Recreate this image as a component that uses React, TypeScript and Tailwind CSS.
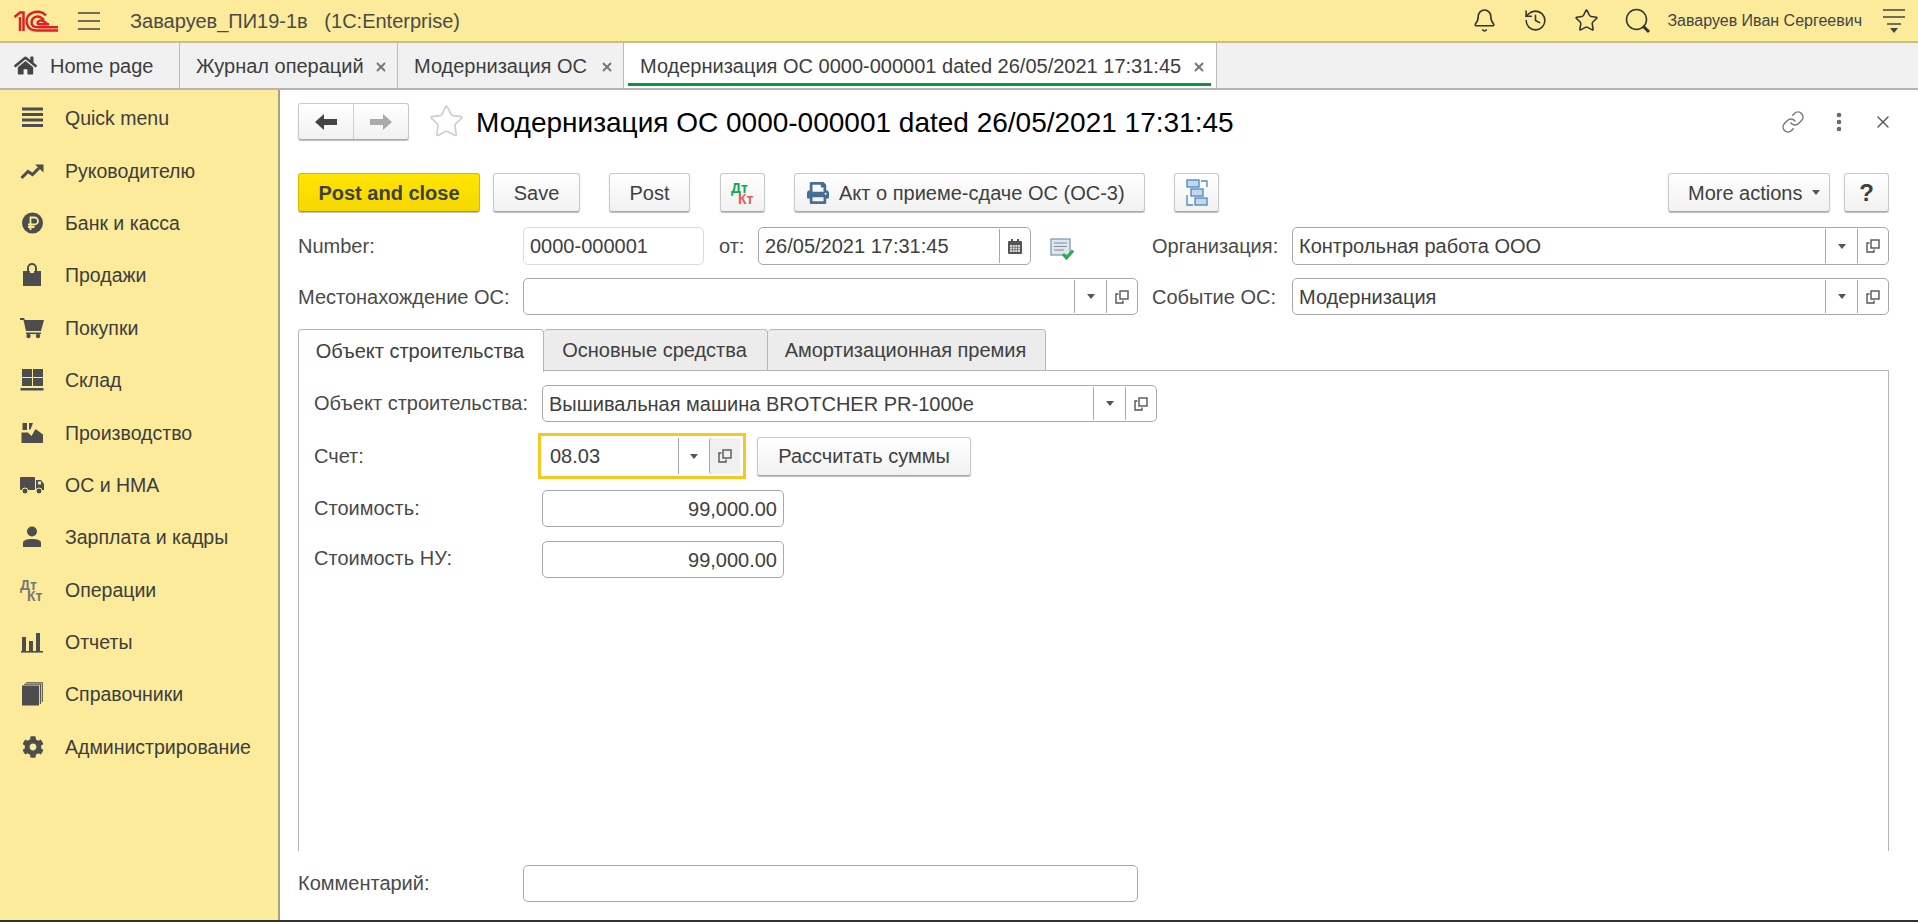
import { Bell, History, Link, MoreVertical, Star, X } from "lucide-react";
import { FaCog, FaHome, FaPrint } from "react-icons/fa";
import type { ReactNode } from "react";

const ink = "#4d4d4d";

function Logo() {
  return (
    <svg width="46" height="22" viewBox="13 8 46 22" fill="none" stroke="#e01f26" strokeWidth="2.5" className="ml-[13px] shrink-0">
      <path d="M14.5 15 L20 10.5 H23.5 V29" />
      <path d="M20 15 V29" />
      <path d="M46 13.5 C42 9 36 9 32 11 C27 13 26 18 27 22 C28 26 32 28.5 37 28.5 H58" />
      <path d="M44 18 C40 14 36 14 33.5 16 C31 18 31 22 33 24 C35 25.2 37 25.2 39 25.2 H58" />
      <path d="M47 22 C44 19 41 18 39 19 C37 20 37 22 39 22.3 H49" />
    </svg>
  );
}

function Caret() {
  return (
    <svg width="8" height="5" viewBox="0 0 8 5" className="shrink-0">
      <path d="M0 0 H8 L4 5 Z" fill="#555" />
    </svg>
  );
}

function CopyIcon() {
  return (
    <svg width="14" height="14" viewBox="0 0 14 14" fill="none" stroke="#555" strokeWidth="1.4">
      <rect x="5" y="1" width="8" height="8" />
      <path d="M3.5 4 H1 V13 H8 V10.5" />
    </svg>
  );
}

function CalendarIcon() {
  return (
    <svg width="14" height="15" viewBox="0 0 14 15">
      <rect x="0" y="2" width="14" height="13" rx="1" fill="#555" />
      <rect x="3" y="0" width="2" height="4" fill="#555" />
      <rect x="9" y="0" width="2" height="4" fill="#555" />
      <rect x="2" y="6" width="10" height="7" fill="#ddd" />
      <path d="M2 8.3 H12 M2 10.6 H12 M4.5 6 V13 M7 6 V13 M9.5 6 V13" stroke="#666" strokeWidth="0.7" />
    </svg>
  );
}

function DocCheckIcon() {
  return (
    <svg width="24" height="22" viewBox="0 0 24 22" className="shrink-0">
      <rect x="1" y="1" width="19" height="16" fill="#dfe6ee" stroke="#7f9bb8" strokeWidth="1.3" />
      <path d="M4 5 H17 M4 8.5 H17 M4 12 H14" stroke="#7f8c99" strokeWidth="1.2" />
      <path d="M13 16 L16.5 20 L23 12.5" fill="none" stroke="#2eae4a" strokeWidth="3" />
    </svg>
  );
}

function StructureIcon() {
  return (
    <svg width="22" height="27" viewBox="0 0 22 27" fill="none">
      <rect x="1" y="1" width="12" height="7" fill="#c4d8ec" stroke="#4f86bb" strokeWidth="1.3" />
      <rect x="5" y="10" width="12" height="7" fill="#c4d8ec" stroke="#4f86bb" strokeWidth="1.3" />
      <rect x="9" y="19" width="12" height="7" fill="#c4d8ec" stroke="#4f86bb" strokeWidth="1.3" />
      <path d="M15 2 H21 V8 M1 16 V26 H7" stroke="#4f86bb" strokeWidth="1.3" />
    </svg>
  );
}

function DebitCredit({ first, second }: { first: string; second: string }) {
  return (
    <svg width="28" height="28" viewBox="0 0 28 28" fontFamily="'Liberation Sans', Arial, sans-serif" fontWeight="700" fontSize="14" className="overflow-visible">
      <text x="2" y="14" fill={first}>Дт</text>
      <text x="9" y="25" fill={second}>Кт</text>
    </svg>
  );
}

function SearchIcon() {
  return (
    <svg width="26" height="26" viewBox="0 0 26 26" fill="none" stroke="#333" className="ml-[26px] shrink-0">
      <circle cx="11.5" cy="11.5" r="10" strokeWidth="1.5" />
      <path d="M18 18 L24 24" strokeWidth="3" />
    </svg>
  );
}

function TopMenuIcon() {
  return (
    <svg width="22" height="24" viewBox="0 0 22 24" className="shrink-0">
      <path d="M0 1 H22 M0 8 H22 M4 15 H18" stroke="#444" strokeWidth="1.4" />
      <path d="M7 19 H15 L11 24 Z" fill="#444" />
    </svg>
  );
}

const sideIcons: Record<string, ReactNode> = {
  menu: (
    <svg width="24" height="24" viewBox="0 0 24 24" fill={ink}>
      <rect x="2" y="1.5" width="21" height="3" />
      <rect x="2" y="7" width="21" height="3" />
      <rect x="2" y="12.5" width="21" height="3" />
      <rect x="2" y="18" width="21" height="3" />
    </svg>
  ),
  trend: (
    <svg width="24" height="24" viewBox="0 0 24 24" fill={ink}>
      <path d="M1.5 19 L8 12.5 L12.5 15.5 L19 9" fill="none" stroke={ink} strokeWidth="3" />
      <path d="M15 5.5 H23.5 V13.5 Z" />
    </svg>
  ),
  ruble: (
    <svg width="24" height="24" viewBox="0 0 24 24">
      <circle cx="12.5" cy="12" r="10.5" fill={ink} />
      <path d="M10.5 19 V6.5 H14.5 A3.5 3.5 0 0 1 14.5 13.5 H8 M8 16 H14.5" fill="none" stroke="#fbeb9b" strokeWidth="1.8" />
    </svg>
  ),
  bag: (
    <svg width="24" height="24" viewBox="0 0 24 24" fill={ink}>
      <path d="M3 8 H21 V23 H3 Z" />
      <path d="M8 11 V5 A4 4 0 0 1 16 5 V11" fill="none" stroke={ink} strokeWidth="2" />
      <rect x="10" y="6" width="4" height="4" fill="#fbeb9b" />
    </svg>
  ),
  cart: (
    <svg width="24" height="24" viewBox="0 0 24 24" fill={ink}>
      <path d="M0 2 H4 L5 4 H24 L21 15 H6 L3.5 4 H0 Z" />
      <rect x="6" y="16.5" width="15" height="1.6" />
      <circle cx="8.5" cy="20" r="2.2" />
      <circle cx="18" cy="20" r="2.2" />
    </svg>
  ),
  grid: (
    <svg width="24" height="24" viewBox="0 0 24 24" fill={ink}>
      <rect x="2" y="1" width="10" height="8" />
      <rect x="13" y="1" width="10" height="8" />
      <rect x="2" y="10" width="10" height="8" />
      <rect x="13" y="10" width="10" height="8" />
      <rect x="0.5" y="20" width="23" height="2.5" />
    </svg>
  ),
  factory: (
    <svg width="24" height="24" viewBox="0 0 24 24" fill={ink}>
      <path d="M1.5 22 V11.5 H8 L11.5 15 L15.5 8 L23 13.5 V22 Z" />
      <path d="M2.5 2 H7 V9 H2.5 Z" />
      <path d="M9 2 H13 L10.5 8.5 H9 Z" />
    </svg>
  ),
  truck: (
    <svg width="24" height="24" viewBox="0 0 24 24" fill={ink}>
      <rect x="0" y="4" width="15" height="13" rx="1" />
      <path d="M16 7 H21 L24 11 V17 H16 Z" />
      <rect x="18" y="8.5" width="3" height="3" fill="#fbeb9b" />
      <circle cx="5" cy="18" r="3" stroke="#fbeb9b" />
      <circle cx="19" cy="18" r="3" stroke="#fbeb9b" />
    </svg>
  ),
  person: (
    <svg width="24" height="24" viewBox="0 0 24 24" fill={ink}>
      <circle cx="12" cy="6.5" r="5" />
      <path d="M3 22 V18 C3 15 7 14 12 14 C17 14 21 15 21 18 V22 Z" />
    </svg>
  ),
  bars: (
    <svg width="24" height="24" viewBox="0 0 24 24" fill={ink}>
      <rect x="2" y="7" width="4" height="14" />
      <rect x="9" y="11" width="4" height="10" />
      <rect x="16" y="3" width="4" height="18" />
      <rect x="1" y="21" width="22" height="1.6" />
    </svg>
  ),
  books: (
    <svg width="24" height="24" viewBox="0 0 24 24" fill={ink}>
      <rect x="2" y="3.5" width="17" height="20" />
      <path d="M4 2.3 H20.4 V22 M6 0.7 H22.3 V20" fill="none" stroke={ink} strokeWidth="1.1" />
    </svg>
  ),
  gear: <FaCog size={22} color={ink} className="ml-[1px]" />,
  dtkt: <DebitCredit first="#777" second="#777" />,
};

const sideItems = [
  ["menu", "Quick menu"],
  ["trend", "Руководителю"],
  ["ruble", "Банк и касса"],
  ["bag", "Продажи"],
  ["cart", "Покупки"],
  ["grid", "Склад"],
  ["factory", "Производство"],
  ["truck", "ОС и НМА"],
  ["person", "Зарплата и кадры"],
  ["dtkt", "Операции"],
  ["bars", "Отчеты"],
  ["books", "Справочники"],
  ["gear", "Администрирование"],
];

function Sidebar() {
  return (
    <aside className="flex w-[280px] shrink-0 flex-col border-r-2 border-[#a9a277] bg-[#fbeb9b] pt-[2px] text-[19.5px]">
      {sideItems.map(([icon, label]) => (
        <div key={label} className="flex h-[52.4px] items-center pl-5 text-[#3d3d3d]">
          <span className="flex h-6 w-6 shrink-0 items-center justify-center">{sideIcons[icon]}</span>
          <span className="ml-[21px]">{label}</span>
        </div>
      ))}
    </aside>
  );
}

function DocTab({ label, width, active }: { label: string; width: string; active?: boolean }) {
  return (
    <div className={`relative flex h-full shrink-0 items-center border-r border-[#b9b9b9] ${width} ${active ? "bg-white" : ""}`}>
      <span className="ml-4 whitespace-nowrap text-[#3d3d3d]">{label}</span>
      <X size={14} strokeWidth={3.2} color="#777" className={`absolute top-[17px] ${active ? "right-[10px]" : "right-[9px]"}`} />
      {active && <div className="absolute bottom-[2px] left-[4px] right-[5px] h-[3px] bg-[#0b9444]" />}
    </div>
  );
}

function Btn({ children, className = "", primary }: { children: ReactNode; className?: string; primary?: boolean }) {
  const tone = primary
    ? "border-[#d6b800] border-b-[#b59c00] from-[#ffe500] to-[#f5d800]"
    : "border-[#c9c9c9] border-b-[#a8a8a8] from-white to-[#f1f1f1]";
  return (
    <div className={`flex h-[39px] shrink-0 items-center rounded-[3px] border bg-gradient-to-b text-[#404040] shadow-[0_1px_1px_#bdbdbd] ${tone} ${className}`}>
      {children}
    </div>
  );
}

function Field({
  value,
  className = "",
  pick,
  calendar,
  right,
  light,
}: {
  value?: string;
  className?: string;
  pick?: boolean;
  calendar?: boolean;
  right?: boolean;
  light?: boolean;
}) {
  return (
    <div className={`flex h-full items-stretch rounded-[5px] border bg-white ${light ? "border-[#dcdcdc]" : "border-[#a8a8a8]"} ${className}`}>
      <span className={`min-w-0 flex-1 self-center px-[6px] leading-none text-[#404040] ${right ? "text-right" : ""}`}>{value}</span>
      {pick && (
        <>
          <span className="my-[1px] flex w-[32px] items-center justify-center border-l border-[#a8a8a8]">
            <Caret />
          </span>
          <span className="my-[1px] flex w-[31px] items-center justify-center border-l border-[#a8a8a8]">
            <CopyIcon />
          </span>
        </>
      )}
      {calendar && (
        <span className="my-[1px] flex w-[31px] items-center justify-center border-l border-[#a8a8a8]">
          <CalendarIcon />
        </span>
      )}
    </div>
  );
}

function Label({ children, className = "" }: { children: ReactNode; className?: string }) {
  return <span className={`shrink-0 text-[#4a4a4a] ${className}`}>{children}</span>;
}

export default function App() {
  return (
    <div className="flex h-[922px] w-[1918px] flex-col overflow-hidden bg-white font-['Liberation_Sans',Arial,sans-serif] text-[20px] leading-6">
      {/* top bar */}
      <header className="flex h-[43px] shrink-0 items-center border-b-2 border-[#c9bf85] bg-[#fbeb9b] text-[#4a4a4a]">
        <Logo />
        <svg width="22" height="18" viewBox="0 0 22 18" className="ml-[19px] shrink-0">
          <path d="M0 1 H22 M0 9 H22 M0 17 H22" stroke="#444" strokeWidth="1.4" />
        </svg>
        <span className="ml-[30px] whitespace-pre">Заваруев_ПИ19-1в   (1C:Enterprise)</span>
        <div className="ml-auto flex items-center">
          <Bell size={25} strokeWidth={1.5} color="#333" />
          <History size={25} strokeWidth={1.5} color="#333" className="ml-[26px]" />
          <Star size={25} strokeWidth={1.5} color="#333" className="ml-[26px]" />
          <SearchIcon />
          <span className="ml-[16px] text-[16px] text-[#444]">Заваруев Иван Сергеевич</span>
          <span className="ml-[21px] mr-[13px]">
            <TopMenuIcon />
          </span>
        </div>
      </header>

      {/* open tabs */}
      <nav className="flex h-[47px] shrink-0 items-stretch border-b-2 border-[#b5b5b5] bg-[#f1f1f1]">
        <div className="flex w-[180px] shrink-0 items-center border-r border-[#b9b9b9]">
          <FaHome size={23} color="#444" className="ml-[14px]" />
          <span className="ml-[13px] text-[#3d3d3d]">Home page</span>
        </div>
        <DocTab label="Журнал операций" width="w-[218px]" />
        <DocTab label="Модернизация ОС" width="w-[226px]" />
        <DocTab label="Модернизация ОС 0000-000001 dated 26/05/2021 17:31:45" width="w-[593px]" active />
      </nav>

      <div className="flex min-h-0 flex-1">
        <Sidebar />
        <main className="flex min-w-0 flex-1 flex-col pl-[18px] pr-[29px] pt-[13px]">
          {/* form title */}
          <div className="flex h-[37px] shrink-0 items-center">
            <div className="flex h-[37px] w-[111px] shrink-0 rounded-[3px] border border-[#c9c9c9] border-b-[#a8a8a8] bg-gradient-to-b from-white to-[#f1f1f1] shadow-[0_1px_1px_#bdbdbd]">
              <span className="flex flex-1 items-center justify-center border-r border-[#cfcfcf]">
                <svg width="22" height="16" viewBox="0 0 22 16">
                  <path d="M0 8 L9 0 V5 H22 V11 H9 V16 Z" fill="#444" />
                </svg>
              </span>
              <span className="flex flex-1 items-center justify-center">
                <svg width="22" height="16" viewBox="0 0 22 16">
                  <path d="M22 8 L13 0 V5 H0 V11 H13 V16 Z" fill="#aaa" />
                </svg>
              </span>
            </div>
            <Star size={37} strokeWidth={1.1} color="#c9cfd6" className="ml-[19px] shrink-0" />
            <h1 className="ml-[11px] mt-[2px] whitespace-nowrap text-[28px] text-black">Модернизация ОС 0000-000001 dated 26/05/2021 17:31:45</h1>
            <div className="ml-auto flex items-center">
              <Link size={24} strokeWidth={1.5} color="#777" />
              <MoreVertical size={24} strokeWidth={2.6} color="#666" className="ml-[22px]" />
              <X size={20} strokeWidth={1.6} color="#555" className="ml-[22px] mr-[-4px]" />
            </div>
          </div>

          {/* command bar */}
          <div className="mt-[33px] flex shrink-0 items-center">
            <Btn primary className="w-[182px] justify-center font-bold text-[#333]">Post and close</Btn>
            <Btn className="ml-[13px] w-[87px] justify-center">Save</Btn>
            <Btn className="ml-[29px] w-[81px] justify-center">Post</Btn>
            <Btn className="ml-[30px] w-[45px] justify-center">
              <DebitCredit first="#12a84f" second="#e85a5a" />
            </Btn>
            <Btn className="ml-[29px] w-[351px] pl-[12px]">
              <FaPrint size={22} color="#456f99" />
              <span className="ml-[10px]">Акт о приеме-сдаче ОС (ОС-3)</span>
            </Btn>
            <Btn className="ml-[29px] w-[45px] justify-center">
              <StructureIcon />
            </Btn>
            <Btn className="ml-auto w-[162px] pl-[19px]">
              More actions
              <span className="ml-[9px]">
                <Caret />
              </span>
            </Btn>
            <Btn className="ml-[14px] w-[45px] justify-center text-[24px] font-bold text-[#333]">?</Btn>
          </div>

          {/* header fields */}
          <div className="mt-[15px] flex h-[38px] shrink-0 items-center">
            <Label className="w-[225px] -mt-[1px]">Number:</Label>
            <Field value="0000-000001" light className="w-[181px]" />
            <Label className="ml-[15px] w-[39px]">от:</Label>
            <Field value="26/05/2021 17:31:45" calendar className="w-[273px]" />
            <span className="ml-[19px] mt-[6px] w-[24px]">
              <DocCheckIcon />
            </span>
            <Label className="ml-[78px] w-[140px]">Организация:</Label>
            <Field value="Контрольная работа ООО" pick className="flex-1" />
          </div>
          <div className="mt-[13px] flex h-[37px] shrink-0 items-center">
            <Label className="w-[225px]">Местонахождение ОС:</Label>
            <Field pick className="w-[615px]" />
            <Label className="ml-[14px] w-[140px]">Событие ОС:</Label>
            <Field value="Модернизация" pick className="flex-1" />
          </div>

          {/* page tabs */}
          <div className="relative z-10 -mb-px mt-[14px] flex h-[42px] shrink-0 items-stretch text-[#404040]">
            <div className="flex h-[43px] w-[246px] items-center justify-center rounded-t-[4px] border border-b-0 border-[#b5b5b5] bg-white pr-[2px]">Объект строительства</div>
            <div className="flex w-[224px] items-center justify-center rounded-t-[4px] border border-l-0 border-[#b5b5b5] bg-[#ececec] pr-[2px]">Основные средства</div>
            <div className="flex w-[278px] items-center justify-center rounded-t-[4px] border border-l-0 border-[#b5b5b5] bg-[#ececec] pr-[2px]">Амортизационная премия</div>
          </div>
          <section className="flex h-[481px] shrink-0 flex-col border border-b-0 border-[#b5b5b5] pl-[15px] pt-[14px]">
            <div className="flex h-[37px] shrink-0 items-center">
              <Label className="w-[228px] -mt-[2px]">Объект строительства:</Label>
              <Field value="Вышивальная машина BROTCHER PR-1000e" pick className="w-[615px]" />
            </div>
            <div className="mt-[11px] flex h-[46px] shrink-0 items-center">
              <Label className="w-[224px]">Счет:</Label>
              <div className="flex h-full w-[208px] items-stretch border-[3px] border-[#f8c81c] bg-white">
                <span className="flex-1 self-center pl-[9px] text-[#404040]">08.03</span>
                <span className="my-[2px] flex w-[31px] items-center justify-center border-l border-[#a8a8a8]">
                  <Caret />
                </span>
                <span className="my-[2px] mr-[3px] flex w-[31px] items-center justify-center rounded-[3px] border-l border-[#a8a8a8] bg-[#f0f0f0]">
                  <CopyIcon />
                </span>
              </div>
              <Btn className="ml-[11px] w-[214px] justify-center">Рассчитать суммы</Btn>
            </div>
            <div className="mt-[11px] flex h-[37px] shrink-0 items-center">
              <Label className="w-[228px] -mt-[2px]">Стоимость:</Label>
              <Field value="99,000.00" right className="w-[242px]" />
            </div>
            <div className="mt-[14px] flex h-[37px] shrink-0 items-center">
              <Label className="w-[228px] -mt-[4px]">Стоимость НУ:</Label>
              <Field value="99,000.00" right className="w-[242px]" />
            </div>
          </section>

          <div className="mt-[14px] flex h-[37px] shrink-0 items-center">
            <Label className="w-[225px] -mt-[1px]">Комментарий:</Label>
            <Field className="w-[615px]" />
          </div>
        </main>
      </div>
      <div className="h-[2px] shrink-0 bg-[#33312a]" />
    </div>
  );
}
